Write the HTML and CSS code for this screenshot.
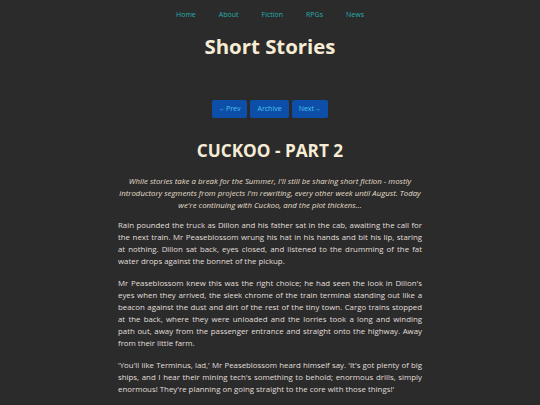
FILE: index.html
```html
<!DOCTYPE html>
<html lang="en">
<head>
    <meta charset="UTF-8">
    <meta name="viewport" content="width=device-width, initial-scale=1.0">
    <title>Short Stories</title>
    <link rel="stylesheet" href="styles.css">
</head>
<body>
    <nav>
        <ul>
            <li><a href="#">Home</a></li>
            <li><a href="#">About</a></li>
            <li><a href="#">Fiction</a></li>
            <li><a href="#">RPGs</a></li>
            <li><a href="#">News</a></li>
        </ul>
    </nav>

    <header>
        <h1>Short Stories</h1>
    </header>

    <div class="pager">
        <a href="#">&larr;Prev</a>
        <a href="#">Archive</a>
        <a href="#">Next&rarr;</a>
    </div>

    <article>
        <h2>CUCKOO - PART 2</h2>
        <p class="intro">While stories take a break for the Summer, I'll still be sharing short fiction - mostly introductory segments from projects I'm rewriting, every other week until August. Today we're continuing with Cuckoo, and the plot thickens...</p>
        <p>Rain pounded the truck as Dillon and his father sat in the cab, awaiting the call for the next train. Mr Peaseblossom wrung his hat in his hands and bit his lip, staring at nothing. Dillon sat back, eyes closed, and listened to the drumming of the fat water drops against the bonnet of the pickup.</p>
        <p>Mr Peaseblossom knew this was the right choice; he had seen the look in Dillon's eyes when they arrived, the sleek chrome of the train terminal standing out like a beacon against the dust and dirt of the rest of the tiny town. Cargo trains stopped at the back, where they were unloaded and the lorries took a long and winding path out, away from the passenger entrance and straight onto the highway. Away from their little farm.</p>
        <p>'You'll like Terminus, lad,' Mr Peaseblossom heard himself say. 'It's got plenty of big ships, and I hear their mining tech's something to behold; enormous drills, simply enormous! They're planning on going straight to the core with those things!'</p>
        <p>Dillon grunted in reply, his eyes still closed. He could hear the rain on the roof of the truck, the engine ticking as it cooled, his father's breathing.</p>
    </article>
</body>
</html>
```

FILE: styles.css
```css
body {
    font-family: "Open Sans", "Noto Sans", sans-serif;
    margin: 0;
    padding: 0;
    background: #2b2b2b;
    color: #e0dfda;
}
nav {
    padding-top: 10px;
    display: flex;
    justify-content: center;
}
nav ul {
    list-style: none;
    padding: 0;
    margin: 0;
    display: flex;
    gap: 23px;
    font-size: 7px;
    line-height: 10px;
}
nav ul li a {
    color: #26aeb0;
    text-decoration: none;
}
header {
    margin-top: 12px;
    text-align: center;
}
h1 {
    margin: 0;
    font-size: 20.4px;
    line-height: 28px;
    color: #f7ecd6;
    font-weight: 700;
}
.pager {
    margin-top: 40px;
    display: flex;
    justify-content: center;
    gap: 3px;
    font-size: 7px;
}
.pager a {
    background: #0c4ea8;
    color: #4cc2ee;
    text-decoration: none;
    line-height: 18px;
    padding: 0 7px;
    border-radius: 2px;
}
article {
    width: 304px;
    margin: 21px auto 0;
}
h2 {
    margin: 0;
    text-align: center;
    font-size: 17.2px;
    line-height: 24px;
    color: #f7ecd6;
    font-weight: 700;
}
p {
    font-size: 7.85px;
    line-height: 12px;
    margin: 0 0 10px;
    text-align: justify;
}
.intro {
    margin: 12px -4px 8px;
    text-align: center;
    font-style: italic;
    color: #e4ddc8;
}
```
